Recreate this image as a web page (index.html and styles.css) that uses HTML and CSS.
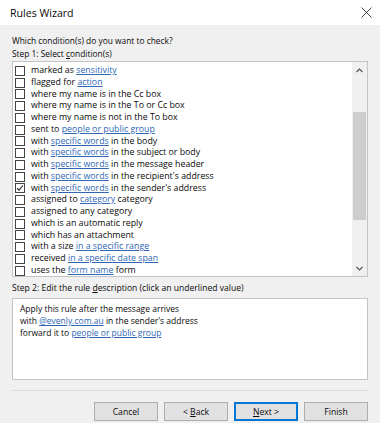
FILE: index.html
```html
<!DOCTYPE html>
<html lang="en">
<head>
    <meta charset="UTF-8">
    <title>Rules Wizard</title>
    <link rel="stylesheet" href="styles.css">
</head>
<body>
    <div class="window">
        <div class="titlebar">
            <span class="title">Rules Wizard</span>
            <svg class="close" width="11" height="11" viewBox="0 0 11 11">
                <path d="M0.5 0.5 L10.5 10.5 M10.5 0.5 L0.5 10.5" stroke="#333" stroke-width="0.9" fill="none"/>
            </svg>
        </div>

        <div class="content">
            <p class="line">Which condition(s) do you want to check?</p>
            <p class="line">Step 1: Select <u>c</u>ondition(s)</p>

            <div class="listbox">
                <ul class="conditions">
                    <li><span class="check"></span><span>marked as <a href="#">sensitivity</a></span></li>
                    <li><span class="check"></span><span>flagged for <a href="#">action</a></span></li>
                    <li><span class="check"></span><span>where my name is in the Cc box</span></li>
                    <li><span class="check"></span><span>where my name is in the To or Cc box</span></li>
                    <li><span class="check"></span><span>where my name is not in the To box</span></li>
                    <li><span class="check"></span><span>sent to <a href="#">people or public group</a></span></li>
                    <li><span class="check"></span><span>with <a href="#">specific words</a> in the body</span></li>
                    <li><span class="check"></span><span>with <a href="#">specific words</a> in the subject or body</span></li>
                    <li><span class="check"></span><span>with <a href="#">specific words</a> in the message header</span></li>
                    <li><span class="check"></span><span>with <a href="#">specific words</a> in the recipient's address</span></li>
                    <li><span class="check"><svg width="8" height="8" viewBox="0 0 8 8"><path d="M1 4.2 L3 6.2 L7 1.5" stroke="#222" stroke-width="1.1" fill="none"/></svg></span><span>with <a href="#">specific words</a> in the sender's address</span></li>
                    <li><span class="check"></span><span>assigned to <a href="#">category</a> category</span></li>
                    <li><span class="check"></span><span>assigned to any category</span></li>
                    <li><span class="check"></span><span>which is an automatic reply</span></li>
                    <li><span class="check"></span><span>which has an attachment</span></li>
                    <li><span class="check"></span><span>with a size <a href="#">in a specific range</a></span></li>
                    <li><span class="check"></span><span>received <a href="#">in a specific date span</a></span></li>
                    <li><span class="check"></span><span>uses the <a href="#">form name</a> form</span></li>
                </ul>
                <div class="scrollbar">
                    <div class="arrow">
                        <svg width="7" height="5" viewBox="0 0 7 5"><path d="M0.5 4 L3.5 1 L6.5 4" stroke="#555" stroke-width="1.2" fill="none"/></svg>
                    </div>
                    <div class="track">
                        <div class="thumb"></div>
                    </div>
                    <div class="arrow">
                        <svg width="7" height="5" viewBox="0 0 7 5"><path d="M0.5 1 L3.5 4 L6.5 1" stroke="#555" stroke-width="1.2" fill="none"/></svg>
                    </div>
                </div>
            </div>

            <p class="line step2">Step 2: Edit the rule <u>d</u>escription (click an underlined value)</p>

            <div class="description">
                <p>Apply this rule after the message arrives</p>
                <p>with <a href="#">@evenly.com.au</a> in the sender's address</p>
                <p>forward it to <a href="#">people or public group</a></p>
            </div>
        </div>

        <div class="separator"></div>

        <div class="buttons">
            <button>Cancel</button>
            <button>&lt; <u>B</u>ack</button>
            <button class="default"><u>N</u>ext &gt;</button>
            <button>Finish</button>
        </div>
    </div>
</body>
</html>
```

FILE: styles.css
```css
body {
    margin: 0;
    background-color: #ffffff;
    font-family: 'Open Sans', 'Noto Sans', sans-serif;
    font-size: 8.8px;
    color: #0a0a0a;
}

.window {
    width: 380px;
    height: 423px;
    background-color: #f0f0f0;
    display: flex;
    flex-direction: column;
}

.titlebar {
    height: 25px;
    background-color: #ffffff;
    display: flex;
    align-items: center;
    justify-content: space-between;
    padding: 0 8px 0 10px;
}

.title {
    font-size: 10.6px;
}

.content {
    padding: 9px 12px 0 12px;
}

.line {
    margin: 0;
    font-size: 8.4px;
    line-height: 13px;
    white-space: nowrap;
}

.step2 {
    margin-top: 5px;
    font-size: 8.6px;
    line-height: 12px;
}

a {
    color: #2f67b5;
    text-decoration: underline;
}

.listbox {
    margin-top: 1px;
    height: 214px;
    border: 1px solid #c4c4c4;
    background-color: #ffffff;
    display: flex;
}

.conditions {
    flex: 1;
    list-style: none;
    margin: 0;
    padding: 3px 0 0 2px;
    overflow: hidden;
}

.conditions li {
    height: 11.75px;
    line-height: 11.75px;
    display: flex;
    align-items: center;
    white-space: nowrap;
}

.check {
    width: 8px;
    height: 8px;
    border: 1px solid #444;
    background-color: #fff;
    margin-right: 6px;
    flex-shrink: 0;
    display: flex;
    align-items: center;
    justify-content: center;
}

.scrollbar {
    width: 15px;
    background-color: #f0f0f0;
    display: flex;
    flex-direction: column;
}

.arrow {
    height: 16px;
    display: flex;
    align-items: center;
    justify-content: center;
}

.track {
    flex: 1;
}

.thumb {
    margin: 34px 1px 0 1px;
    height: 108px;
    background-color: #cdcdcd;
}

.description {
    margin-top: 4px;
    height: 73px;
    border: 1px solid #c4c4c4;
    background-color: #ffffff;
    padding: 4px 7px 3px 7px;
}

.description p {
    margin: 0;
    font-size: 8.5px;
    line-height: 12px;
    white-space: nowrap;
}

.separator {
    margin: 10px 12px 0 12px;
    height: 1px;
    background-color: #dadada;
}

.buttons {
    margin-top: 11px;
    padding-right: 12px;
    display: flex;
    justify-content: flex-end;
    gap: 6px;
}

button {
    width: 64px;
    height: 19px;
    padding: 0;
    font-family: inherit;
    font-size: 8.6px;
    color: #0a0a0a;
    background-color: #e1e1e1;
    border: 1px solid #adadad;
}

button.default {
    border: 1px solid #0078d7;
    box-shadow: inset 0 0 0 1px #0078d7;
}
```
